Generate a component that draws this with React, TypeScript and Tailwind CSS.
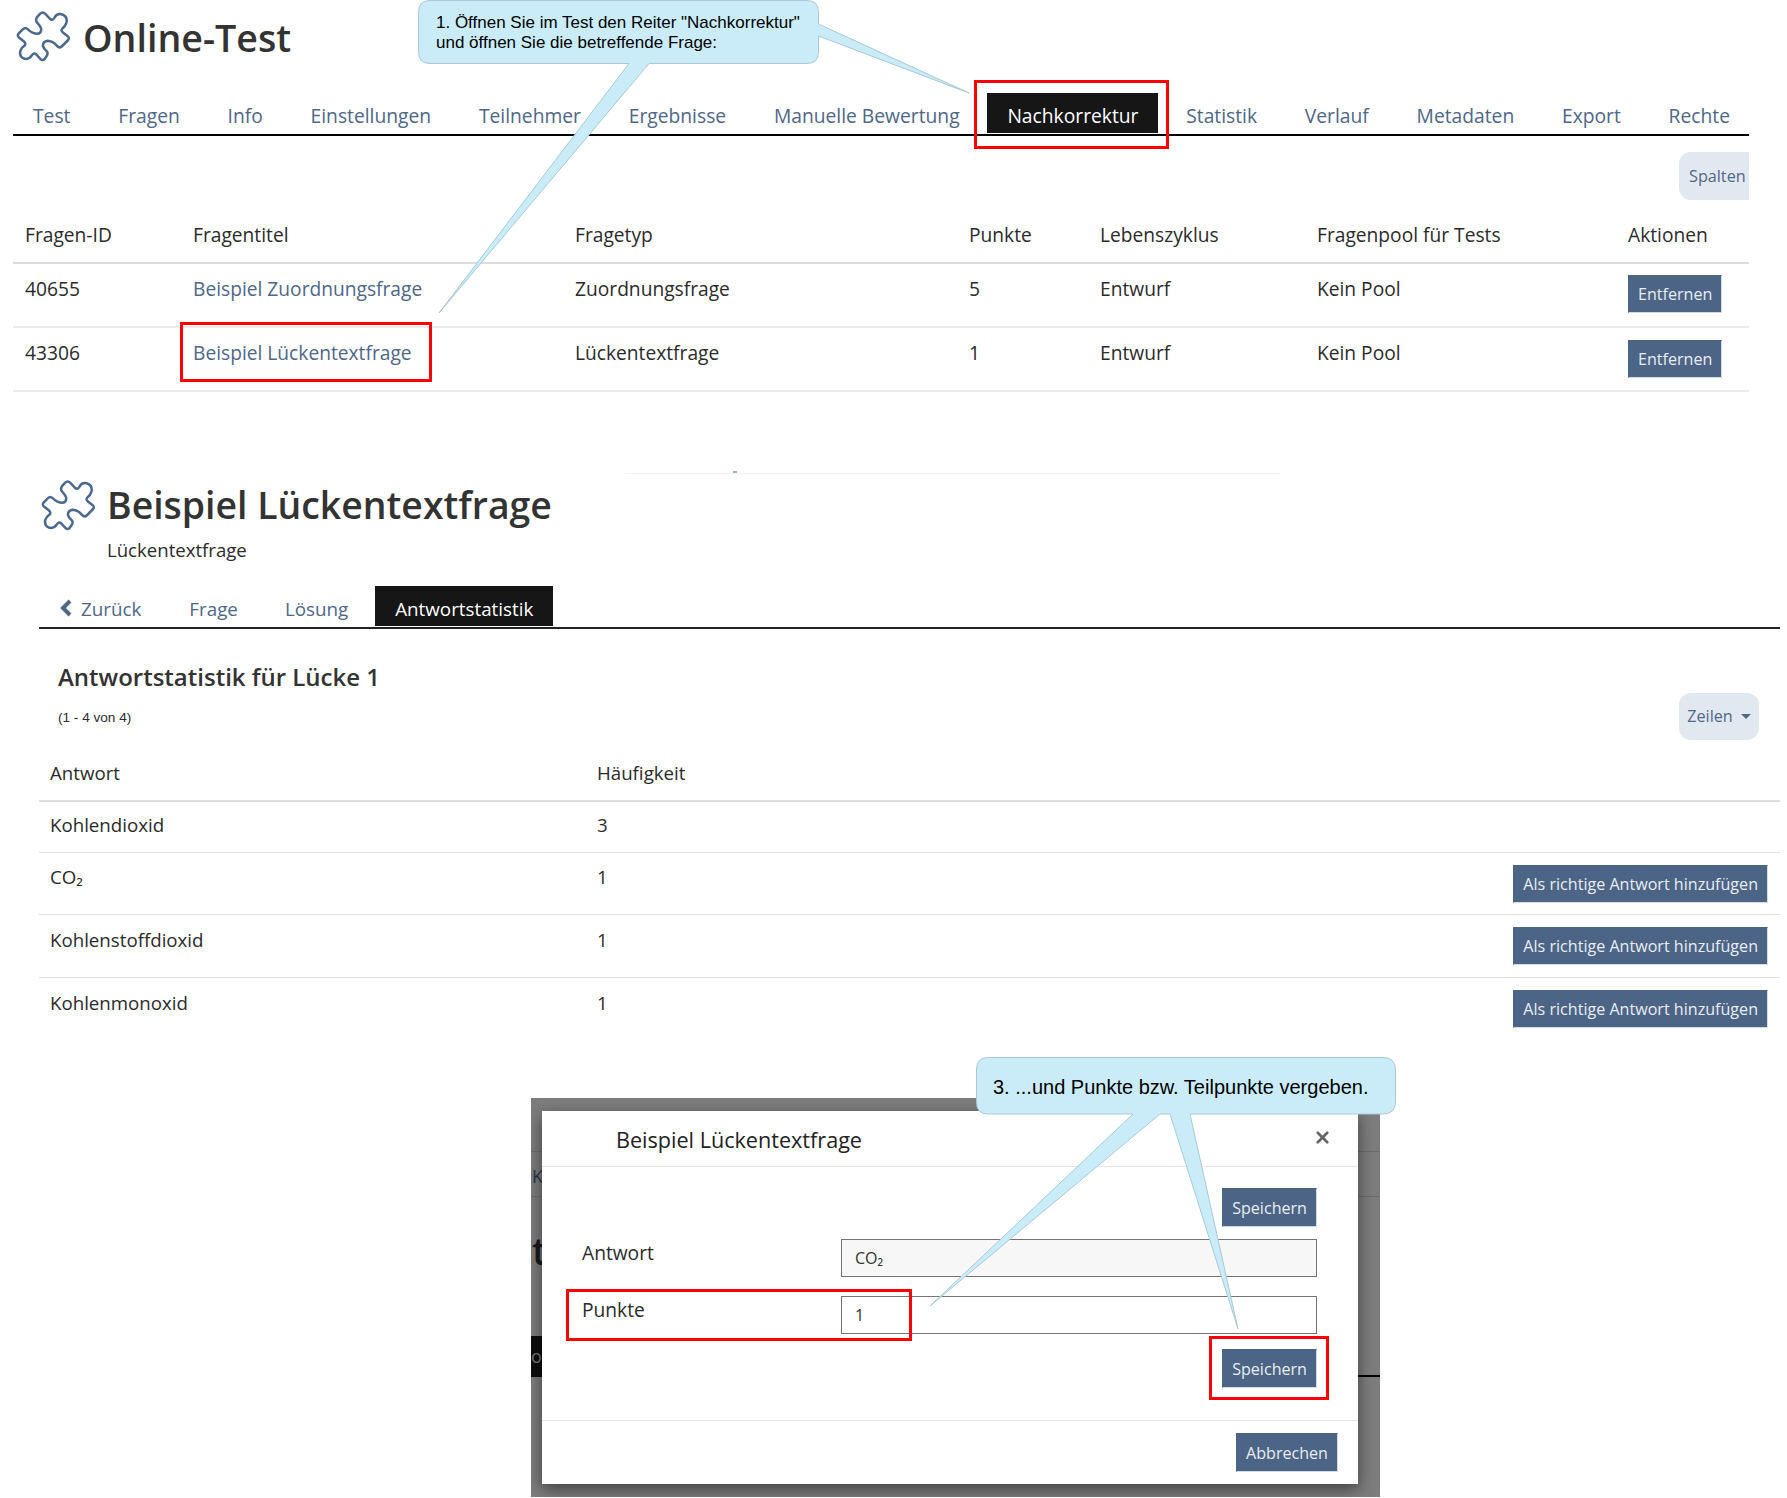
import { X } from "lucide-react";

const mainTabs = ["Test", "Fragen", "Info", "Einstellungen", "Teilnehmer", "Ergebnisse", "Manuelle Bewertung", "Nachkorrektur", "Statistik", "Verlauf", "Metadaten", "Export", "Rechte"];

const questions = [
  { id: "40655", title: "Beispiel Zuordnungsfrage", type: "Zuordnungsfrage", points: "5", btn: "pt-[11px]" },
  { id: "43306", title: "Beispiel Lückentextfrage", type: "Lückentextfrage", points: "1", btn: "pt-[12px]" },
];

const answers = [
  { text: "Kohlendioxid", count: "3", action: false, row: "h-[51px]", pad: "pt-[11px]" },
  { text: "CO₂", count: "1", action: true, row: "h-[62px]", pad: "pt-[12px]" },
  { text: "Kohlenstoffdioxid", count: "1", action: true, row: "h-[63px]", pad: "pt-[13px]" },
  { text: "Kohlenmonoxid", count: "1", action: true, row: "h-[62px]", pad: "pt-[13px]" },
];

const PuzzleIcon = () => (
  <svg viewBox="32 24 168 158" className="w-[56px] h-[53px] shrink-0" fill="none" stroke="#4c6a8f" strokeWidth="7.5" strokeLinejoin="round" strokeLinecap="round">
    <path d="M107 35 Q115 27 123 35 L136 49 Q144 57 150 47 Q158 32 174 37 Q191 44 186 62 Q183 72 175 78 Q168 84 175 90 L190 102 Q197 108 190 115 L172 133 Q165 139 158 131 Q146 117 130 116 Q115 118 116 132 Q118 140 127 147 Q133 154 126 163 L121 170 Q115 177 108 170 L96 157 Q89 150 83 159 Q74 174 58 169 Q44 162 48 146 Q51 137 60 131 Q66 125 59 118 L44 106 Q37 100 44 93 L56 81 Q63 74 70 81 Q84 95 100 95 Q113 92 110 78 Q107 70 99 62 Q92 55 98 45 Z" />
  </svg>
);

const Btn = ({ label, className = "" }: { label: string; className?: string }) => (
  <button className={`bg-[#4c6586] text-[#e9edf2] text-[16.1px] leading-[24px] px-[9px] h-[38px] border border-[#d5dce6] border-t-[#4c6586] border-l-[#4c6586] ${className}`}>
    {label}
  </button>
);

const SheetTab = ({ label, active, size }: { label: string; active?: boolean; size: string }) => (
  <a className={`h-10 px-5 pt-[6px] flex items-center whitespace-nowrap ${size} ${active ? "bg-[#161616] text-white" : "text-[#4f6788]"}`}>{label}</a>
);

export default function App() {
  return (
    <div className="relative w-[1787px] h-[1498px] overflow-hidden bg-white text-[#2b2b2b] font-['Open_Sans',sans-serif]">
      {/* test page */}
      <section className="ml-[13px] w-[1736px]">
        <header className="h-[93px] pt-[10px] pl-[2px] flex items-start gap-[12px]">
          <PuzzleIcon />
          <h1 className="text-[37.6px] leading-[54px] font-semibold text-[#333] mt-px">Online-Test</h1>
        </header>
        <nav className="flex gap-[7.75px] border-b-2 border-black pb-px">
          {mainTabs.map((tab) => (
            <SheetTab key={tab} label={tab} active={tab === "Nachkorrektur"} size="text-[19.25px]" />
          ))}
        </nav>
        <div className="mt-4 flex justify-end">
          <button className="w-[70px] h-[48px] rounded-l-xl bg-[#e2e8f0] text-[#4f6788] text-[16.2px] text-left pl-[10px] overflow-hidden">Spalten</button>
        </div>
        <table className="w-full table-fixed border-collapse text-[19.2px] leading-[24px]">
          <colgroup>
            <col className="w-[168px]" />
            <col className="w-[382px]" />
            <col className="w-[394px]" />
            <col className="w-[131px]" />
            <col className="w-[217px]" />
            <col className="w-[311px]" />
            <col />
          </colgroup>
          <thead>
            <tr className="h-[63px] border-b-2 border-[#dcdcdc] text-left">
              {["Fragen-ID", "Fragentitel", "Fragetyp", "Punkte", "Lebenszyklus", "Fragenpool für Tests", "Aktionen"].map((h) => (
                <th key={h} className="pl-3 pt-[7px] font-normal">{h}</th>
              ))}
            </tr>
          </thead>
          <tbody>
            {questions.map((q) => (
              <tr key={q.id} className="h-[64px] border-b-2 border-[#ececec] align-top">
                <td className="pl-3 pt-[13px]">{q.id}</td>
                <td className="pl-3 pt-[13px] text-[#4f6788]">{q.title}</td>
                <td className="pl-3 pt-[13px]">{q.type}</td>
                <td className="pl-3 pt-[13px]">{q.points}</td>
                <td className="pl-3 pt-[13px]">Entwurf</td>
                <td className="pl-3 pt-[13px]">Kein Pool</td>
                <td className={`pl-3 ${q.btn}`}><Btn label="Entfernen" /></td>
              </tr>
            ))}
          </tbody>
        </table>
      </section>

      <div className="relative ml-[625px] w-[655px] h-px mt-[81px] bg-[#f3f3f3]">
        <span className="absolute left-[108px] -top-[2px] w-1 h-[2px] bg-[#9db4bd]" />
      </div>

      {/* question page */}
      <section className="ml-[39px] w-[1741px]">
        <header className="pl-px pt-[5px] h-[112px]">
          <div className="flex items-start gap-[11px]">
            <PuzzleIcon />
            <h2 className="text-[37.4px] leading-[52px] font-semibold text-[#333]">Beispiel Lückentextfrage</h2>
          </div>
          <p className="ml-[67px] mt-[6px] text-[18.6px] leading-[24px]">Lückentextfrage</p>
        </header>
        <nav className="flex gap-[7px] border-b-2 border-[#222] pb-px">
          <a className="h-10 px-5 pt-[6px] mr-px flex items-center gap-[9px] text-[18.8px] text-[#4f6788]">
            <svg viewBox="0 0 13 18" className="w-[13px] h-[18px] shrink-0 -mt-[2px]" fill="none" stroke="#4f6788" strokeWidth="4">
              <path d="M11 2 L4 9 L11 16" />
            </svg>
            Zurück
          </a>
          <SheetTab label="Frage" size="text-[18.8px]" />
          <SheetTab label="Lösung" size="text-[18.8px]" />
          <SheetTab label="Antwortstatistik" active size="text-[18.8px]" />
        </nav>
        <div className="pl-[19px] pr-[21px] flex justify-between items-start">
          <div>
            <h3 className="mt-[30px] text-[24px] leading-[36px] font-semibold text-[#333]">Antwortstatistik für Lücke 1</h3>
            <p className="mt-[15px] text-[13.6px] leading-[16px] font-['Liberation_Sans',sans-serif]">(1 - 4 von 4)</p>
          </div>
          <button className="mt-[64px] w-[80px] h-[47px] rounded-xl bg-[#e2e8f0] text-[#4f6788] text-[16.2px] flex items-center justify-center gap-2">
            Zeilen
            <span className="w-0 h-0 border-x-[5px] border-x-transparent border-t-[5px] border-t-[#4f6788]" />
          </button>
        </div>
        <table className="w-full table-fixed border-collapse text-[18.7px] leading-[24px]">
          <thead>
            <tr className="h-[61px] border-b-2 border-[#dedede] text-left">
              <th className="pl-[11px] pt-[6px] font-normal w-[547px]">Antwort</th>
              <th className="pl-[11px] pt-[6px] font-normal w-[300px]">Häufigkeit</th>
              <th />
            </tr>
          </thead>
          <tbody>
            {answers.map((a, i) => (
              <tr key={a.text} className={`${a.row} align-top ${i < answers.length - 1 ? "border-b border-[#e2e2e2]" : ""}`}>
                <td className={`pl-[11px] ${a.pad}`}>{a.text}</td>
                <td className={`pl-[11px] ${a.pad}`}>{a.count}</td>
                <td className="pr-3 pt-3 text-right">{a.action && <Btn label="Als richtige Antwort hinzufügen" />}</td>
              </tr>
            ))}
          </tbody>
        </table>
      </section>

      {/* dialog over the dimmed page */}
      <section className="relative ml-[531px] mt-[59px] w-[849px] h-[399px] pt-[13px] pl-[11px] overflow-hidden bg-[#7d7d7d]">
        <div className="absolute inset-x-0 top-[53px] h-px bg-[#6c6c6c]" />
        <div className="absolute inset-x-0 top-[98px] h-px bg-[#6c6c6c]" />
        <span className="absolute left-px top-[66px] text-[18px] leading-[24px] text-[#28364c]">K</span>
        <span className="absolute left-px top-[126px] text-[38px] leading-[52px] font-semibold text-[#1b1b1b]">t</span>
        <div className="absolute left-0 top-[238px] w-[11px] h-[41px] bg-[#0c0c0c] text-[#777] text-[18px] leading-[41px] overflow-hidden">o</div>
        <div className="absolute right-0 top-[277px] w-[22px] h-[2px] bg-black" />

        <div className="relative w-[816px] h-[373px] bg-white flex flex-col shadow-[0_5px_15px_rgba(0,0,0,0.5)]">
          <div className="h-[56px] shrink-0 border-b border-[#e5e5e5] pl-[74px] pr-[26px] flex items-center justify-between">
            <h4 className="text-[21.6px] leading-[30px] mt-[3px] text-[#222]">Beispiel Lückentextfrage</h4>
            <X size={19} strokeWidth={3.4} className="text-[#666] -mt-[3px]" />
          </div>
          <div className="flex-1 pl-10 pr-[41px] pt-[21px]">
            <div className="flex justify-end"><Btn label="Speichern" className="h-[39px]" /></div>
            <div className="mt-3 flex items-start">
              <label className="w-[259px] shrink-0 text-[19.2px] leading-[24px] pt-[2px]">Antwort</label>
              <input readOnly value="CO₂" className="w-[476px] h-[38px] bg-[#f7f7f7] border border-[#757575] pl-[13px] text-[16px] text-[#333]" />
            </div>
            <div className="mt-[19px] flex items-start">
              <label className="w-[259px] shrink-0 text-[19.2px] leading-[24px] pt-[2px]">Punkte</label>
              <input readOnly value="1" className="w-[476px] h-[38px] bg-white border border-[#757575] pl-[13px] text-[16px] text-[#333]" />
            </div>
            <div className="mt-[15px] flex justify-end"><Btn label="Speichern" className="h-[39px]" /></div>
          </div>
          <div className="h-[64px] shrink-0 border-t border-[#e5e5e5] pt-3 pr-5 flex justify-end items-start">
            <Btn label="Abbrechen" className="h-[39px]" />
          </div>
        </div>
      </section>

      {/* annotations drawn over the screenshots */}
      <svg className="absolute inset-0 w-full h-full pointer-events-none" viewBox="0 0 1787 1498" fill="#c9ecf8" stroke="#a9c9d4" strokeWidth="1">
        <path d="M430 0.5 H807 Q818.5 0.5 818.5 12 V24 L969 93 L818.5 36 V52 Q818.5 63.5 807 63.5 H649 L439 313 L629 63.5 H430 Q418.5 63.5 418.5 52 V12 Q418.5 0.5 430 0.5 Z" />
        <path d="M988 1057.5 H1383 Q1395.5 1057.5 1395.5 1070 V1102 Q1395.5 1114 1383 1114 H1190 L1238 1329 L1170 1114 H1160 L930 1306 L1133 1114 H988 Q976.5 1114 976.5 1102 V1070 Q976.5 1057.5 988 1057.5 Z" />
      </svg>
      <p className="absolute left-[436px] top-[13px] text-[17px] leading-[20px] text-black font-['Liberation_Sans',sans-serif] whitespace-nowrap">
        1. Öffnen Sie im Test den Reiter "Nachkorrektur"
        <br />
        und öffnen Sie die betreffende Frage:
      </p>
      <p className="absolute left-[993px] top-[1075px] text-[20px] leading-[24px] text-black font-['Liberation_Sans',sans-serif] whitespace-nowrap">
        3. ...und Punkte bzw. Teilpunkte vergeben.
      </p>
      <div className="absolute left-[974px] top-[80px] w-[195px] h-[69px] border-[3px] border-[#ff0000]" />
      <div className="absolute left-[180px] top-[322px] w-[252px] h-[60px] border-[3px] border-[#ff0000]" />
      <div className="absolute left-[566px] top-[1289px] w-[346px] h-[52px] border-[3px] border-[#ff0000]" />
      <div className="absolute left-[1209px] top-[1336px] w-[120px] h-[64px] border-[3px] border-[#ff0000]" />
    </div>
  );
}
